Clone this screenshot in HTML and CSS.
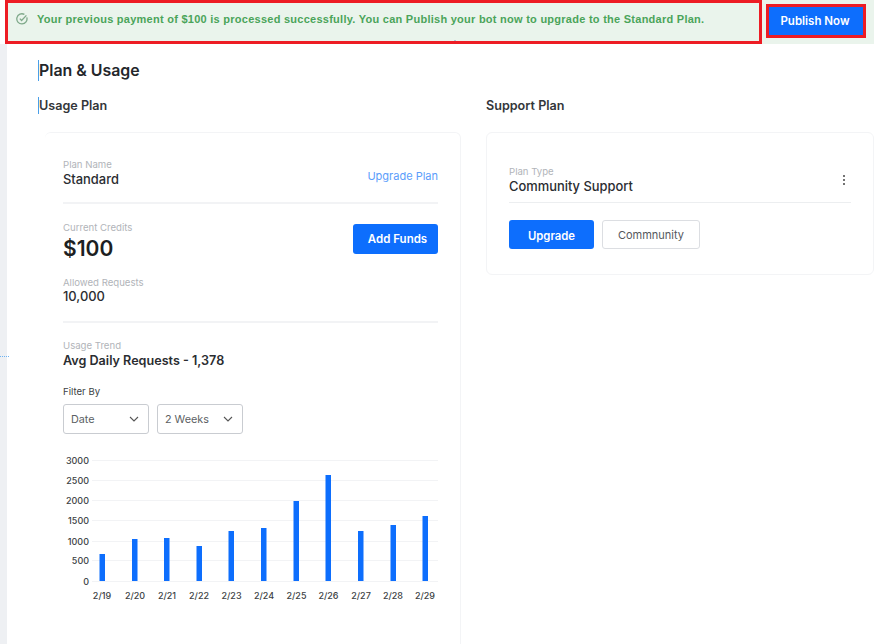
FILE: index.html
```html
<!DOCTYPE html>
<html lang="en">
<head>
    <meta charset="UTF-8">
    <title>Plan &amp; Usage</title>
    <link rel="stylesheet" href="styles.css">
</head>
<body>
    <div class="banner">
        <div class="notice">
            <svg class="notice-icon" width="12" height="12" viewBox="0 0 12 12">
                <path d="M10.8 4.4A5.1 5.1 0 1 1 8.4 1.4" fill="none" stroke="#7fa98a" stroke-width="1.3"/>
                <path d="M3.8 5.6L5.6 7.5L10.4 2.4" fill="none" stroke="#7fa98a" stroke-width="1.3"/>
            </svg>
            <span>Your previous payment of $100 is processed successfully. You can Publish your bot now to upgrade to the Standard Plan.</span>
            <i class="speck"></i>
        </div>
        <button class="publish">Publish Now</button>
    </div>

    <div class="page">
        <i class="dots"></i>
        <h1 class="title">Plan &amp; Usage</h1>
        <div class="columns">
            <section class="usage">
                <h2 class="subtitle">Usage Plan</h2>
                <div class="card usage-card">
                    <div class="row plan-row">
                        <div>
                            <div class="label">Plan Name</div>
                            <div class="value">Standard</div>
                        </div>
                        <a class="link">Upgrade Plan</a>
                    </div>
                    <div class="row credits-row">
                        <div>
                            <div class="label">Current Credits</div>
                            <div class="amount">$100</div>
                        </div>
                        <button class="btn-blue funds">Add Funds</button>
                    </div>
                    <div class="requests">
                        <div class="label">Allowed Requests</div>
                        <div class="value">10,000</div>
                    </div>
                    <div class="trend">
                        <div class="label">Usage Trend</div>
                        <div class="value">Avg Daily Requests - 1,378</div>
                    </div>
                    <div class="filter-label">Filter By</div>
                    <div class="filters">
                        <div class="select">Date
                            <svg width="10" height="6" viewBox="0 0 10 6"><path d="M1 1L5 5L9 1" fill="none" stroke="#555" stroke-width="1.1"/></svg>
                        </div>
                        <div class="select">2 Weeks
                            <svg width="10" height="6" viewBox="0 0 10 6"><path d="M1 1L5 5L9 1" fill="none" stroke="#555" stroke-width="1.1"/></svg>
                        </div>
                    </div>
                    <svg class="chart" width="376" height="160" viewBox="0 0 376 160">
                        <g stroke="#f2f3f5" stroke-width="1">
                            <line x1="29" x2="375" y1="10.5" y2="10.5"/>
                            <line x1="29" x2="375" y1="30.5" y2="30.5"/>
                            <line x1="29" x2="375" y1="50.5" y2="50.5"/>
                            <line x1="29" x2="375" y1="70.5" y2="70.5"/>
                            <line x1="29" x2="375" y1="91.5" y2="91.5"/>
                            <line x1="29" x2="375" y1="110.5" y2="110.5"/>
                            <line x1="29" x2="375" y1="131.5" y2="131.5"/>
                        </g>
                        <g class="ticks" text-anchor="end">
                            <text x="26" y="13.5">3000</text>
                            <text x="26" y="33.5">2500</text>
                            <text x="26" y="53.5">2000</text>
                            <text x="26" y="74">1500</text>
                            <text x="26" y="94.5">1000</text>
                            <text x="26" y="114">500</text>
                            <text x="26" y="134.5">0</text>
                        </g>
                        <g fill="#0d6efd">
                            <rect x="36.5" y="104" width="5.5" height="27"/>
                            <rect x="69" y="89" width="5.5" height="42"/>
                            <rect x="101" y="88" width="5.5" height="43"/>
                            <rect x="133.5" y="96" width="5.5" height="35"/>
                            <rect x="165.5" y="81" width="5.5" height="50"/>
                            <rect x="198" y="78" width="5.5" height="53"/>
                            <rect x="230.5" y="51" width="5.5" height="80"/>
                            <rect x="262.5" y="25" width="5.5" height="106"/>
                            <rect x="295" y="81" width="5.5" height="50"/>
                            <rect x="327.5" y="75" width="5.5" height="56"/>
                            <rect x="359.5" y="66" width="5.5" height="65"/>
                        </g>
                        <g class="ticks" text-anchor="middle">
                            <text x="39" y="149">2/19</text>
                            <text x="72" y="149">2/20</text>
                            <text x="104" y="149">2/21</text>
                            <text x="136" y="149">2/22</text>
                            <text x="168.5" y="149">2/23</text>
                            <text x="201" y="149">2/24</text>
                            <text x="233.5" y="149">2/25</text>
                            <text x="265.5" y="149">2/26</text>
                            <text x="298" y="149">2/27</text>
                            <text x="330" y="149">2/28</text>
                            <text x="362" y="149">2/29</text>
                        </g>
                    </svg>
                </div>
            </section>
            <section class="support">
                <h2 class="subtitle">Support Plan</h2>
                <div class="card support-card">
                    <div class="row type-row">
                        <div>
                            <div class="label">Plan Type</div>
                            <div class="value">Community Support</div>
                        </div>
                        <svg class="kebab" width="4" height="12" viewBox="0 0 4 12" fill="#444">
                            <circle cx="2" cy="2" r="1"/><circle cx="2" cy="6" r="1"/><circle cx="2" cy="10" r="1"/>
                        </svg>
                    </div>
                    <div class="actions">
                        <button class="btn-blue upgrade">Upgrade</button>
                        <button class="btn-plain">Commnunity</button>
                    </div>
                </div>
            </section>
        </div>
    </div>
</body>
</html>
```

FILE: styles.css
```css
html, body {
    margin: 0;
    padding: 0;
}

body {
    width: 874px;
    height: 644px;
    overflow: hidden;
    background-color: #fff;
    font-family: Inter, "Liberation Sans", sans-serif;
    color: #24272b;
}

button {
    font-family: Inter, "Liberation Sans", sans-serif;
    cursor: pointer;
}

.banner {
    display: flex;
    height: 44px;
    margin-left: 5px;
    background-color: #eaf4ec;
}

.notice {
    position: relative;
    display: flex;
    align-items: center;
    gap: 9px;
    box-sizing: border-box;
    width: 757px;
    height: 44px;
    padding: 0 0 7px 8px;
    border: 3px solid #ed1c24;
    font-family: "Liberation Sans", sans-serif;
    font-size: 11px;
    font-weight: 700;
    letter-spacing: 0.26px;
    color: #4aa45a;
}

.notice-icon {
    flex: none;
}

.speck {
    position: absolute;
    left: 446px;
    bottom: 0;
    width: 2px;
    height: 1px;
    background-color: #a9c4dc;
}

.publish {
    box-sizing: border-box;
    width: 100px;
    height: 34px;
    margin: 4px 0 0 4px;
    padding: 0 2px 1px 0;
    border: 3px solid #ed1c24;
    background-color: #0d6efd;
    color: #fff;
    font-size: 11.5px;
    font-weight: 600;
}

.page {
    position: relative;
    box-sizing: border-box;
    height: 600px;
    padding: 16px 0 0 31px;
    border-left: 7px solid #eef0f3;
}

.dots {
    position: absolute;
    left: -7px;
    top: 312px;
    width: 9px;
    border-top: 1px dotted #6db3f2;
}

.title {
    margin: 0;
    height: 21px;
    border-left: 1px solid #4a9fe8;
    font-size: 15.9px;
    line-height: 21px;
    font-weight: 600;
}

.columns {
    display: grid;
    grid-template-columns: 423px 388px;
    column-gap: 25px;
    margin-top: 16px;
}

.subtitle {
    margin: 0;
    height: 17px;
    border-left: 1px solid #4a9fe8;
    font-size: 12.6px;
    line-height: 17px;
    font-weight: 600;
    color: #33363a;
}

.support .subtitle {
    border-left: none;
}

.card {
    box-sizing: border-box;
    margin-top: 18px;
    border: 1px solid #f3f4f6;
    border-radius: 6px;
}

.usage-card {
    height: 530px;
    margin-left: 7px;
    padding: 25px 22px 0 18px;
    border-left: none;
}

.support-card {
    height: 143px;
    padding: 32px 22px 0 22px;
}

.row {
    display: flex;
    justify-content: space-between;
    align-items: center;
}

.label {
    padding-top: 1px;
    font-size: 9.6px;
    line-height: 12px;
    color: #b1b4b9;
}

.value {
    font-size: 12.9px;
    line-height: 17px;
    font-weight: 500;
    color: #2a2d31;
}

.plan-row {
    height: 44px;
    align-items: flex-start;
    border-bottom: 2px solid #f2f3f5;
}

.link {
    margin-top: 11px;
    font-size: 11px;
    color: #5b9dfb;
}

.credits-row {
    align-items: flex-start;
    margin-top: 17px;
}

.amount {
    margin-top: 1px;
    font-size: 21px;
    line-height: 27px;
    font-weight: 600;
    color: #1d1f22;
}

.btn-blue {
    padding: 0;
    border: none;
    border-radius: 3px;
    background-color: #0d6efd;
    color: #fff;
    font-size: 11.5px;
    font-weight: 600;
}

.funds {
    width: 85px;
    height: 30px;
    margin-top: 3px;
    padding-left: 4px;
}

.requests {
    height: 45px;
    margin-top: 14px;
    border-bottom: 2px solid #f2f3f5;
}

.requests .value {
    margin-top: -1px;
}

.trend {
    margin-top: 16px;
}

.trend .value {
    font-size: 12.6px;
    font-weight: 600;
}

.filter-label {
    margin-top: 17px;
    font-size: 9.6px;
    line-height: 12px;
    color: #3c3f44;
}

.filters {
    display: flex;
    gap: 8px;
    margin-top: 6px;
}

.select {
    display: flex;
    justify-content: space-between;
    align-items: center;
    box-sizing: border-box;
    width: 86px;
    height: 30px;
    padding: 0 9px 0 7px;
    border: 1px solid #c9ccd1;
    border-radius: 3px;
    font-size: 10.8px;
    color: #5c5f64;
}

.chart {
    display: block;
    margin-top: 16px;
}

.ticks text {
    font-size: 9px;
    font-weight: 500;
    fill: #3c3f44;
}

.type-row {
    height: 37px;
    align-items: flex-start;
    border-bottom: 1px solid #eceef0;
}

.kebab {
    margin: 9px 5px 0 0;
}

.actions {
    display: flex;
    gap: 8px;
    margin-top: 17px;
}

.upgrade {
    width: 85px;
    height: 29px;
    padding-top: 2px;
    font-size: 11.3px;
}

.btn-plain {
    width: 98px;
    height: 29px;
    padding: 0;
    border: 1px solid #dcdee2;
    border-radius: 3px;
    background-color: #fff;
    color: #55585d;
    font-size: 11px;
}
```
